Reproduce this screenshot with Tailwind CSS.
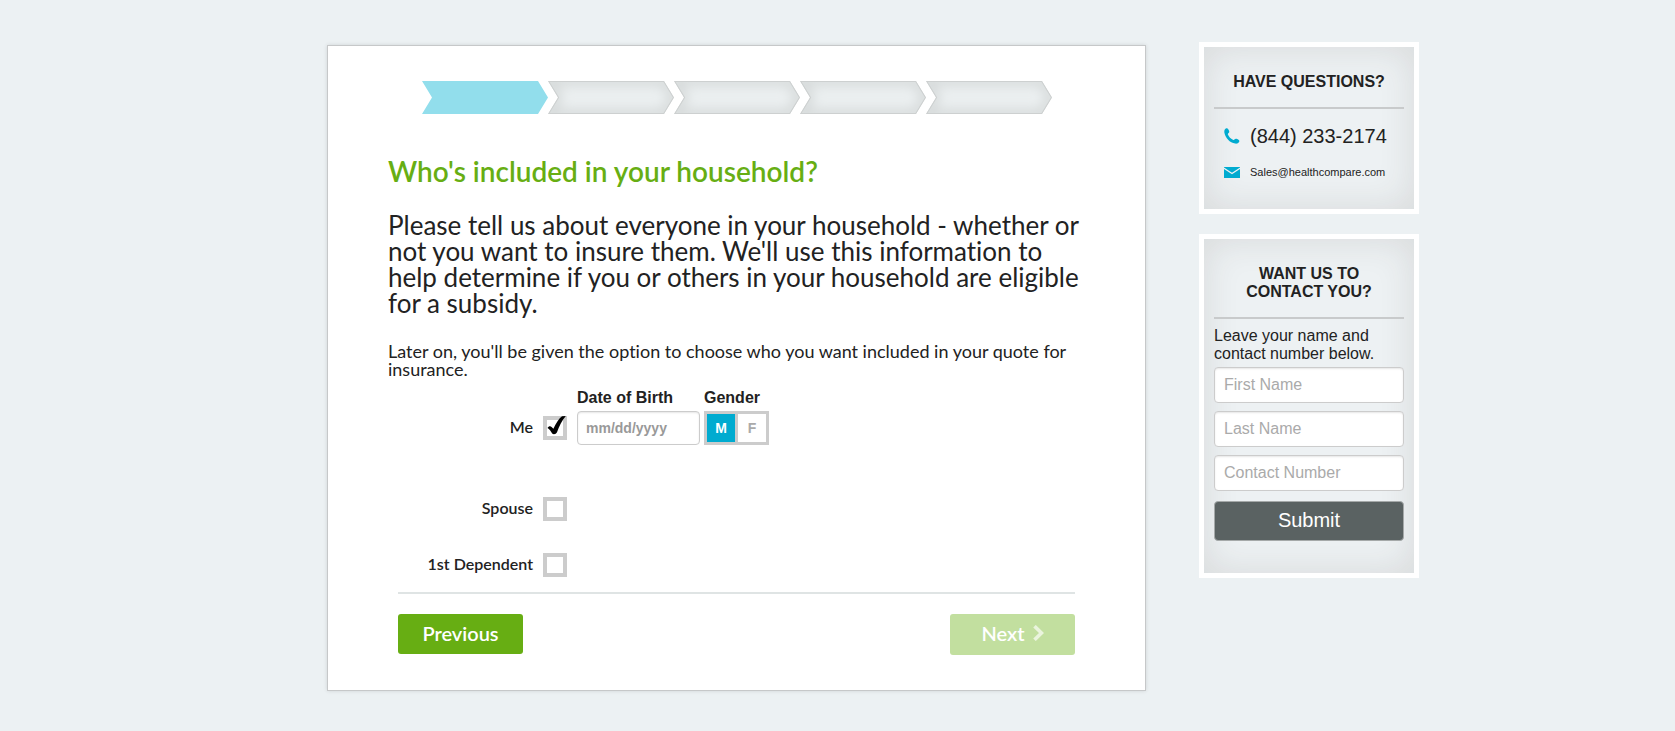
<!DOCTYPE html>
<html lang="en">
<head>
<meta charset="utf-8">
<meta name="viewport" content="width=device-width, initial-scale=1">
<title>Household information</title>
<script src="https://cdn.jsdelivr.net/npm/@tailwindcss/browser@4"></script>
</head>
<body class="min-h-screen bg-[#ecf1f3] font-['Liberation_Sans',Arial,sans-serif] text-[#222] [font-variant-ligatures:none]">
<div class="flex flex-wrap items-start justify-center gap-[53px] pt-[42px] pb-10 lg:pl-[71px]">

  <main class="mt-[3px] w-full max-w-[819px] border border-[#c6c8c9] bg-white px-[60px] pt-[35px] pb-[35px] font-[Lato,sans-serif] shadow-[0_0_4px_rgba(0,0,0,0.12)]">
    <svg class="mx-auto block w-full max-w-[630px]" viewBox="0 0 630 33" role="img" aria-label="Step 1 of 5">
      <defs>
        <path id="step" d="M0 0H116L126 16.5L116 33H0L10 16.5Z"/>
        <clipPath id="stepClip"><use href="#step"/></clipPath>
        <filter id="soft" x="-20%" y="-60%" width="140%" height="220%"><feGaussianBlur stdDeviation="6"/></filter>
        <g id="pending" clip-path="url(#stepClip)">
          <use href="#step" fill="#ebeff0"/>
          <use href="#step" fill="none" stroke="#d2d6d6" stroke-width="8" filter="url(#soft)"/>
          <use href="#step" fill="none" stroke="#cdd0d0" stroke-width="2"/>
        </g>
      </defs>
      <use href="#step" fill="#92deec"/>
      <use href="#pending" x="126"/>
      <use href="#pending" x="252"/>
      <use href="#pending" x="378"/>
      <use href="#pending" x="504"/>
    </svg>

    <h1 class="mt-[43px] text-[28px] leading-7 font-semibold text-[#67ae13]">Who's included in your household?</h1>
    <p class="mt-[27px] text-[26px] leading-[26px]">Please tell us about everyone in your household - whether or not you want to insure them. We'll use this information to help determine if you or others in your household are eligible for a subsidy.</p>
    <p class="mt-[26px] text-[18px] leading-[18px]">Later on, you'll be given the option to choose who you want included in your quote for insurance.</p>

    <form>
      <div class="mt-2.5 flex items-end gap-2.5">
        <label for="me" class="flex h-[34px] w-[145px] items-center justify-end pb-0.5 text-base font-semibold">Me</label>
        <span class="relative flex h-[34px] w-6 items-center">
          <input id="me" type="checkbox" checked class="peer size-6 appearance-none border-4 border-[#ccc] bg-white">
          <svg class="pointer-events-none absolute top-[5px] left-1 hidden h-[19px] w-[19px] peer-checked:block" viewBox="0 0 19 19" aria-hidden="true"><path d="M0.500 12C1.500 10.300 3.300 9.800 4.600 11L6.400 12.800C9 7.300 12 2.500 15 0.300L18.800 0C15 4.500 12.200 10 10 16.300C9 18.600 6 18.800 5 17.300C3.800 15.200 2.500 13 0.500 12Z" fill="#000"/></svg>
        </span>
        <div class="flex gap-1 font-['Liberation_Sans',Arial,sans-serif]">
          <div class="flex w-[123px] flex-col gap-[3px]">
            <label for="dob" class="text-base leading-5 font-bold">Date of Birth</label>
            <input id="dob" type="text" placeholder="mm/dd/yyyy" class="h-[34px] w-full rounded border border-[#ccc] bg-white px-2 text-sm font-bold shadow-[inset_0_1px_2px_rgba(0,0,0,0.1)] placeholder:text-[#999]">
          </div>
          <fieldset>
            <legend class="mb-[3px] text-base leading-5 font-bold">Gender</legend>
            <div class="flex gap-[3px] bg-[#ccc] p-[3px] text-sm font-bold text-[#aaa]">
              <label class="flex size-7 items-center justify-center bg-white has-checked:bg-[#00abd0] has-checked:text-white"><input type="radio" name="gender" value="M" checked class="sr-only">M</label>
              <label class="flex size-7 items-center justify-center bg-white has-checked:bg-[#00abd0] has-checked:text-white"><input type="radio" name="gender" value="F" class="sr-only">F</label>
            </div>
          </fieldset>
        </div>
      </div>
      <div class="mt-[47px] flex h-[34px] items-center gap-2.5">
        <label for="spouse" class="w-[145px] pb-0.5 text-right text-base font-semibold">Spouse</label>
        <input id="spouse" type="checkbox" class="size-6 appearance-none border-4 border-[#ccc] bg-white checked:bg-black">
      </div>
      <div class="mt-[22px] flex h-[34px] items-center gap-2.5">
        <label for="dependent" class="w-[145px] pb-0.5 text-right text-base font-semibold">1st Dependent</label>
        <input id="dependent" type="checkbox" class="size-6 appearance-none border-4 border-[#ccc] bg-white checked:bg-black">
      </div>
      <div class="mx-2.5 mt-2.5 flex items-start justify-between border-t-2 border-[#dfe4e4] pt-5">
        <button type="button" class="h-10 w-[125px] rounded-[3px] bg-[#67ae13] pb-0.5 text-xl font-semibold text-white">Previous</button>
        <button type="button" class="flex h-[41px] w-[125px] items-center justify-center gap-2 rounded-[3px] bg-[#c2df9f] pb-1 text-xl font-semibold text-white">Next
          <svg class="h-4 w-[11px]" viewBox="0 0 11 16" aria-hidden="true"><path d="M1.500 1.200L8.500 8L1.500 14.800" fill="none" stroke="#eaf4dd" stroke-width="3.600"/></svg>
        </button>
      </div>
    </form>
  </main>

  <aside class="flex w-[220px] flex-col gap-5">
    <section class="border-[5px] border-white bg-[#edf1f3] px-2.5 pt-[26px] pb-[29px] shadow-[inset_0_0_36px_rgba(60,50,40,0.12)]">
      <h2 class="border-b-2 border-[#c8cacb] pb-4 text-center text-base leading-[18px] font-bold">HAVE QUESTIONS?</h2>
      <a href="tel:8442332174" class="mt-[15px] flex items-center gap-2.5 pl-2.5 text-xl leading-6 whitespace-nowrap">
        <svg class="size-4 shrink-0" viewBox="0 0 16 16" aria-hidden="true"><path d="M2.300 0.300C3.500-0.100 4.200 0.900 4.800 2.200C5.400 3.500 5.500 4.300 4.600 5C4 5.500 3.600 5.900 4 6.800C5 9 6.700 10.700 8.900 11.800C9.700 12.200 10.200 12 10.700 11.300C11.300 10.500 12 10.500 13.200 11.100C15 12 15.700 12.600 15.200 13.700C14.500 15.200 13 15.900 11.200 15.600C5.700 14.600 1.500 10.300 0.400 4.800C0 2.700 0.700 1 2.300 0.300Z" fill="#00abd0"/></svg>
        (844) 233-2174
      </a>
      <a href="mailto:Sales@healthcompare.com" class="mt-4 flex items-center gap-2.5 pl-2.5 text-[11px] leading-4 whitespace-nowrap">
        <svg class="h-[11px] w-4 shrink-0" viewBox="0 0 16 11" aria-hidden="true"><path d="M0 0H16V11H0Z" fill="#00abd0"/><path d="M-0.500 1L8 6.500L16.500 1" fill="none" stroke="#edf1f3" stroke-width="1.300"/></svg>
        Sales@healthcompare.com
      </a>
    </section>

    <section class="border-[5px] border-white bg-[#edf1f3] px-2.5 pt-[26px] pb-8 shadow-[inset_0_0_36px_rgba(60,50,40,0.12)]">
      <h2 class="border-b-2 border-[#c8cacb] pb-4 text-center text-base leading-[18px] font-bold">WANT US TO<br>CONTACT YOU?</h2>
      <form>
        <p class="mt-2 text-base leading-[18px]">Leave your name and contact number below.</p>
        <div class="mt-1 flex flex-col gap-2">
          <input type="text" aria-label="First Name" placeholder="First Name" class="h-9 w-full rounded border border-[#ccc] bg-white px-[9px] text-base shadow-[inset_0_1px_2px_rgba(0,0,0,0.1)] placeholder:text-[#aaa]">
          <input type="text" aria-label="Last Name" placeholder="Last Name" class="h-9 w-full rounded border border-[#ccc] bg-white px-[9px] text-base shadow-[inset_0_1px_2px_rgba(0,0,0,0.1)] placeholder:text-[#aaa]">
          <input type="tel" aria-label="Contact Number" placeholder="Contact Number" class="h-9 w-full rounded border border-[#ccc] bg-white px-[9px] text-base shadow-[inset_0_1px_2px_rgba(0,0,0,0.1)] placeholder:text-[#aaa]">
        </div>
        <button type="button" class="mt-2.5 h-10 w-full rounded border border-[#a5a9a9] bg-[#5a6262] pb-0.5 text-xl text-white">Submit</button>
      </form>
    </section>
  </aside>
</div>
</body>
</html>
